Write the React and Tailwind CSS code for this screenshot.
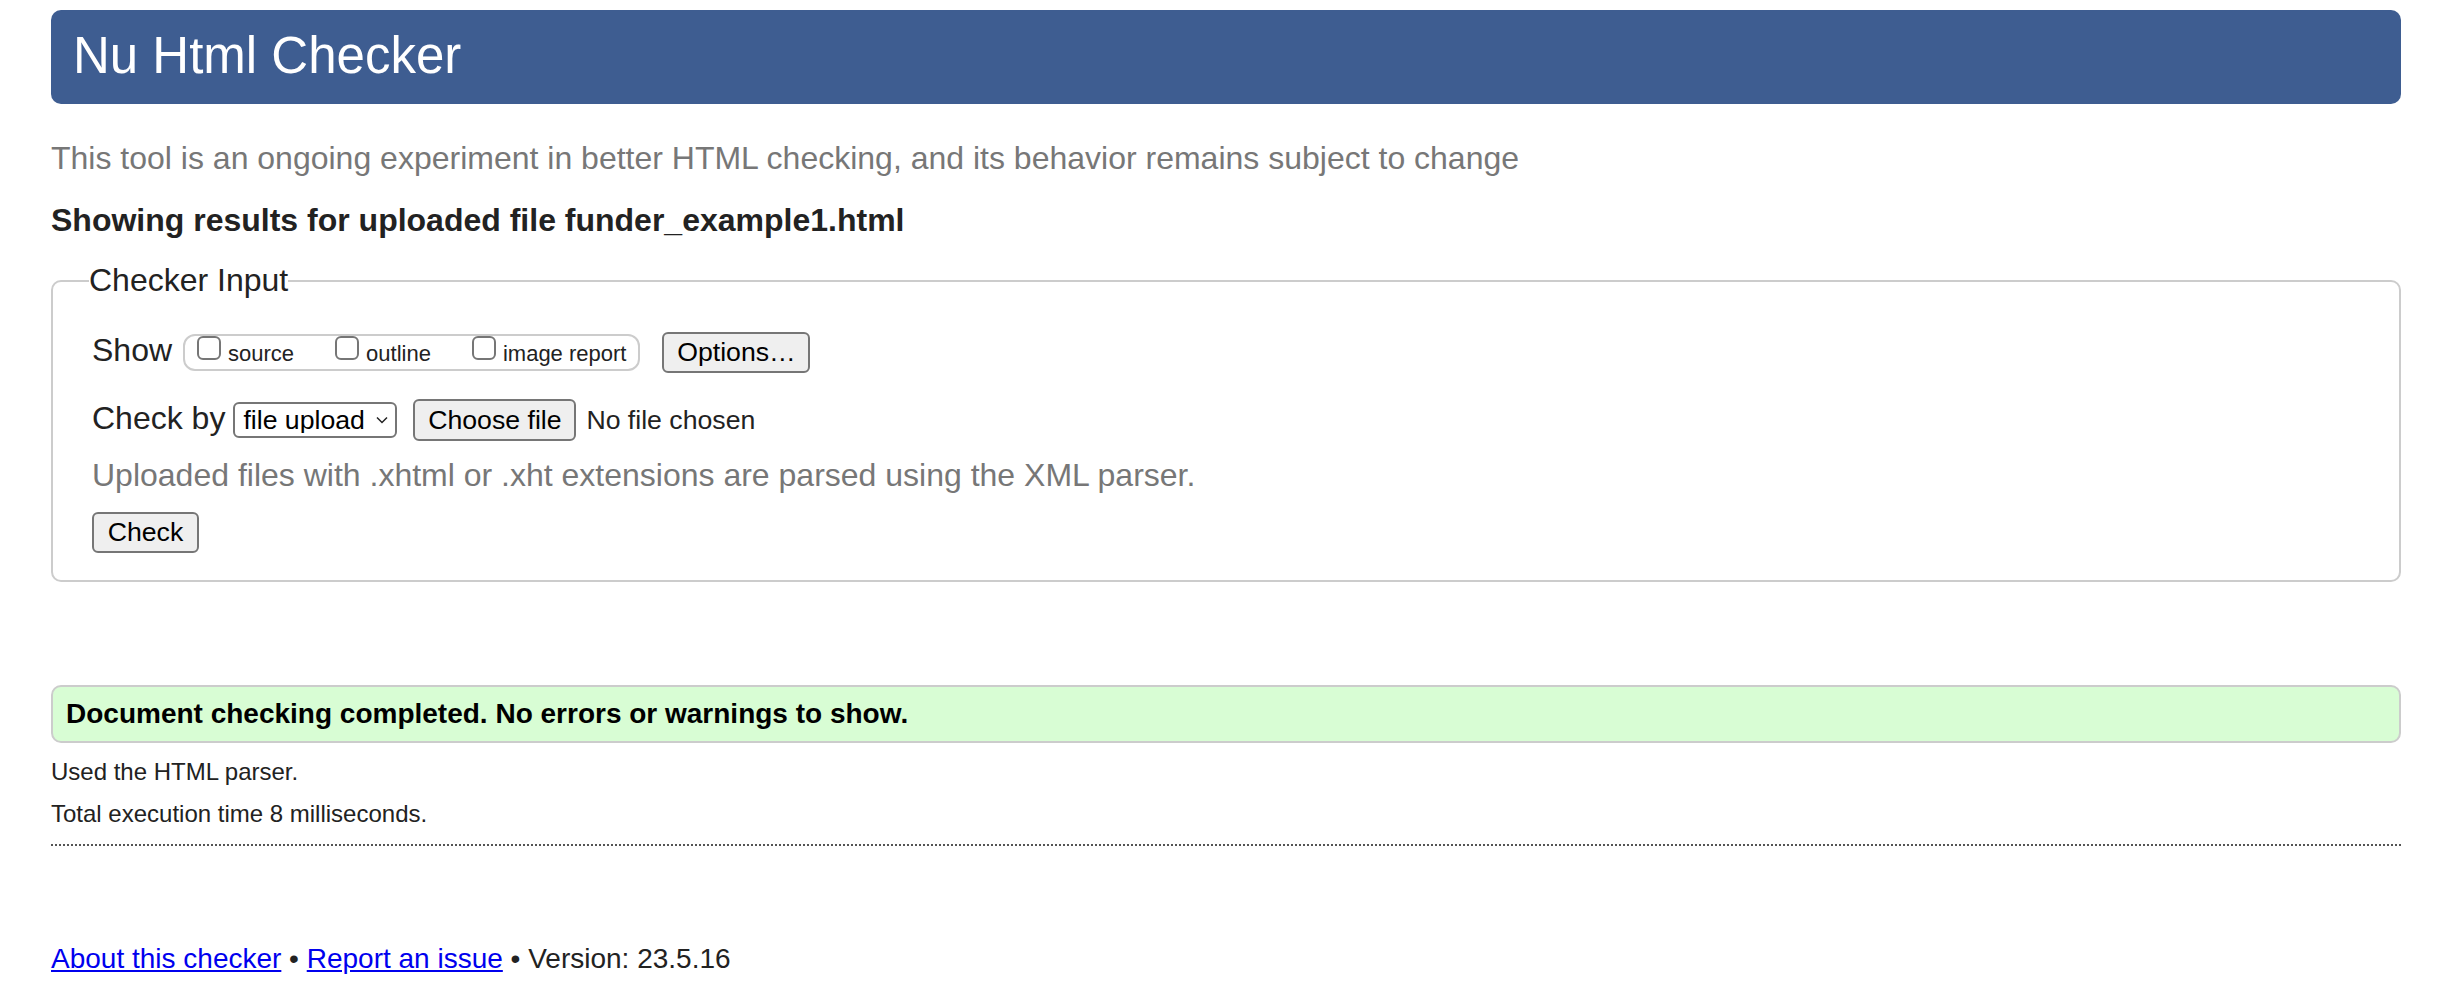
import React from "react";

const font = { fontFamily: '"Liberation Sans", Arial, Helvetica, sans-serif' };

const Box = ({ label }) => (
  <label className="flex items-start">
    <input
      type="checkbox"
      className="appearance-none w-[24px] h-[24px] border-2 border-[#767676] rounded-[6px] bg-white"
    />
    <span className="ml-[7px] mt-[5px] text-[22px] leading-[25px] text-[#222]">{label}</span>
  </label>
);

const Button = ({ children, className = "" }) => (
  <button
    className={`flex items-center justify-center bg-[#efefef] border-2 border-[#767676] rounded-[6px] text-[26.67px] leading-none text-black ${className}`}
  >
    {children}
  </button>
);

export default function App() {
  return (
    <div className="min-h-screen bg-white pl-[51px] pr-[37px]" style={font}>
      <header className="mt-[10px] h-[94px] rounded-[10px] bg-[#3e5d91] flex items-center pl-[22px]">
        <h1 className="text-[51px] leading-[60px] text-white mb-[2px]">Nu Html Checker</h1>
      </header>

      <p className="mt-[36px] text-[32px] leading-[37px] text-[#777]">
        This tool is an ongoing experiment in better HTML checking, and its behavior remains subject to change
      </p>

      <h2 className="mt-[25px] text-[32px] leading-[37px] font-bold text-[#222]">
        Showing results for uploaded file funder_example1.html
      </h2>

      <fieldset className="mt-[23px] border-2 border-[#ccc] rounded-[10px] pl-[39px] pr-[39px] pt-[32px] pb-[27px]">
        <legend className="text-[32px] leading-[37px] text-[#222] ml-[-3px]">Checker Input</legend>

        <div className="flex items-center h-[42px]">
          <span className="text-[32px] leading-[37px] text-[#222] mb-[4px]">Show</span>
          <div className="ml-[11px] h-[37px] border-2 border-[#ccc] rounded-[12px] flex items-start pl-[12px] pr-[12px] gap-[41px]">
            <Box label="source" />
            <Box label="outline" />
            <Box label="image report" />
          </div>
          <Button className="ml-[22px] w-[148px] h-[41px]">Options…</Button>
        </div>

        <div className="flex items-center h-[42px] mt-[26px]">
          <span className="text-[32px] leading-[37px] text-[#222] mb-[4px]">Check by</span>
          <div className="relative ml-[8px]">
            <select className="appearance-none w-[164px] h-[36px] border-2 border-[#767676] rounded-[6px] bg-white pl-[8px] text-[26.67px] leading-none text-black">
              <option>file upload</option>
              <option>address</option>
              <option>text input</option>
            </select>
            <svg
              className="pointer-events-none absolute right-[9px] top-[14px]"
              width="12"
              height="8"
              viewBox="0 0 12 8"
              fill="none"
              stroke="#222"
              strokeWidth="1.5"
            >
              <path d="M1 1.5l5 5 5-5" />
            </svg>
          </div>
          <Button className="ml-[16px] w-[163px] h-[42px]">Choose file</Button>
          <span className="ml-[10px] text-[26.67px] leading-none text-[#222]">No file chosen</span>
        </div>

        <p className="mt-[16px] text-[32px] leading-[37px] text-[#777]">
          Uploaded files with .xhtml or .xht extensions are parsed using the XML parser.
        </p>

        <Button className="mt-[18px] w-[107px] h-[41px]">Check</Button>
      </fieldset>

      <div className="mt-[103px] h-[58px] border-2 border-[#ccc] rounded-[10px] bg-[#d8fdd4] flex items-center pl-[13px]">
        <p className="text-[28px] leading-[32px] font-bold text-black">
          Document checking completed. No errors or warnings to show.
        </p>
      </div>

      <p className="mt-[15px] text-[24px] leading-[28px] text-[#222]">Used the HTML parser.</p>
      <p className="mt-[14px] text-[24px] leading-[28px] text-[#222]">Total execution time 8 milliseconds.</p>

      <div className="mt-[16px] border-t-2 border-dotted border-[#555]" />

      <footer className="mt-[97px] text-[28px] leading-[32px] text-[#222]">
        <a href="#" className="text-[#0000ee] underline">About this checker</a>
        {" • "}
        <a href="#" className="text-[#0000ee] underline">Report an issue</a>
        {" • Version: 23.5.16"}
      </footer>
    </div>
  );
}
